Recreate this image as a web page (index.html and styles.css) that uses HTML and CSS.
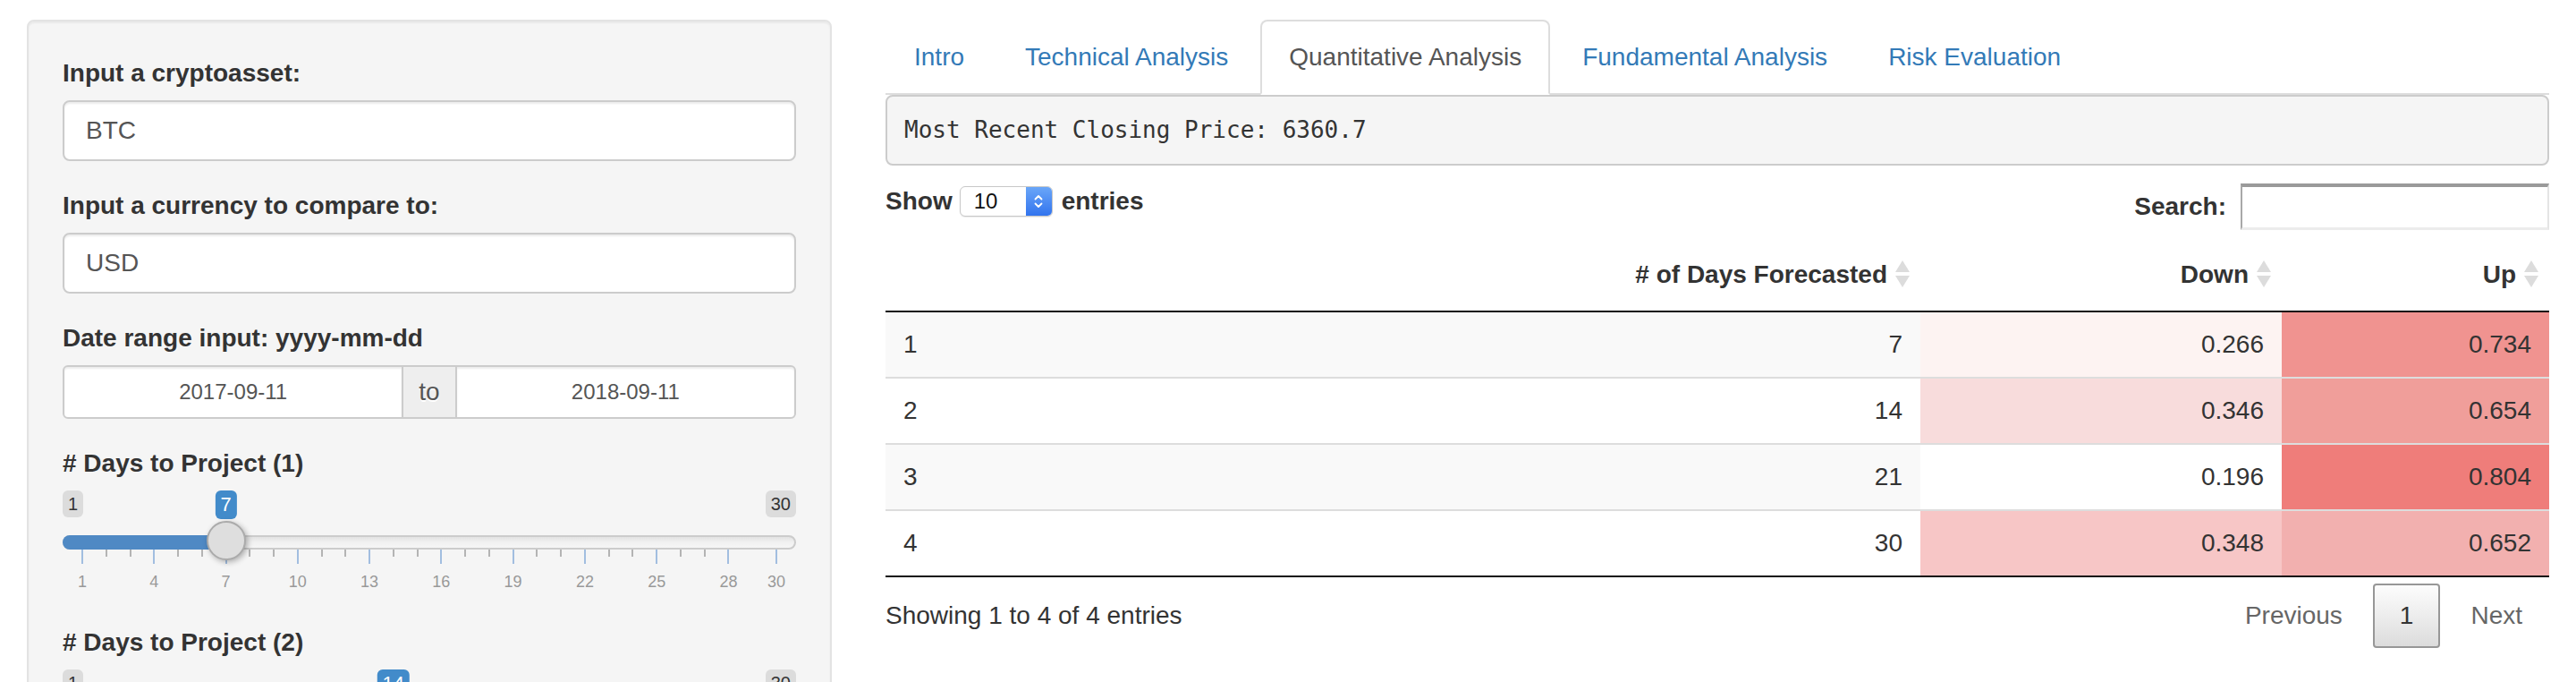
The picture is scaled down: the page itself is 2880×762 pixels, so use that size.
FILE: index.html
```html
<!DOCTYPE html>
<html lang="en">
<head>
<meta charset="utf-8">
<title>Crypto Forecast</title>
<link rel="stylesheet" href="styles.css">
</head>
<body>
<div class="page">
  <aside class="well">
    <div class="form-group">
      <label class="control-label">Input a cryptoasset:</label>
      <div class="text-input">BTC</div>
    </div>
    <div class="form-group">
      <label class="control-label">Input a currency to compare to:</label>
      <div class="text-input">USD</div>
    </div>
    <div class="form-group">
      <label class="control-label">Date range input: yyyy-mm-dd</label>
      <div class="daterange">
        <div class="date-input first">2017-09-11</div>
        <span class="addon">to</span>
        <div class="date-input last">2018-09-11</div>
      </div>
    </div>
    <div class="form-group">
      <label class="control-label"># Days to Project (1)</label>
      <div class="irs">
        <div class="irs-ends"><span class="irs-minmax">1</span><span class="irs-minmax">30</span></div>
        <span class="irs-single" style="left:182.55px">7</span>
        <div class="irs-line"><div class="irs-bar" style="width:182.55px"></div></div>
        <span class="irs-handle" style="left:160.55px"></span>
        <div class="irs-grid">
          <span class="gc major"><i></i><b>1</b></span><span class="gc"><i></i></span><span class="gc"><i></i></span>
          <span class="gc major"><i></i><b>4</b></span><span class="gc"><i></i></span><span class="gc"><i></i></span>
          <span class="gc major"><i></i><b>7</b></span><span class="gc"><i></i></span><span class="gc"><i></i></span>
          <span class="gc major"><i></i><b>10</b></span><span class="gc"><i></i></span><span class="gc"><i></i></span>
          <span class="gc major"><i></i><b>13</b></span><span class="gc"><i></i></span><span class="gc"><i></i></span>
          <span class="gc major"><i></i><b>16</b></span><span class="gc"><i></i></span><span class="gc"><i></i></span>
          <span class="gc major"><i></i><b>19</b></span><span class="gc"><i></i></span><span class="gc"><i></i></span>
          <span class="gc major"><i></i><b>22</b></span><span class="gc"><i></i></span><span class="gc"><i></i></span>
          <span class="gc major"><i></i><b>25</b></span><span class="gc"><i></i></span><span class="gc"><i></i></span>
          <span class="gc major"><i></i><b>28</b></span><span class="gc"></span>
          <span class="gc major"><i></i><b>30</b></span>
        </div>
      </div>
    </div>
    <div class="form-group">
      <label class="control-label"># Days to Project (2)</label>
      <div class="irs">
        <div class="irs-ends"><span class="irs-minmax">1</span><span class="irs-minmax">30</span></div>
        <span class="irs-single" style="left:369.86px">14</span>
        <div class="irs-line"><div class="irs-bar" style="width:369.86px"></div></div>
        <span class="irs-handle" style="left:347.86px"></span>
        <div class="irs-grid">
          <span class="gc major"><i></i><b>1</b></span><span class="gc"><i></i></span><span class="gc"><i></i></span>
          <span class="gc major"><i></i><b>4</b></span><span class="gc"><i></i></span><span class="gc"><i></i></span>
          <span class="gc major"><i></i><b>7</b></span><span class="gc"><i></i></span><span class="gc"><i></i></span>
          <span class="gc major"><i></i><b>10</b></span><span class="gc"><i></i></span><span class="gc"><i></i></span>
          <span class="gc major"><i></i><b>13</b></span><span class="gc"><i></i></span><span class="gc"><i></i></span>
          <span class="gc major"><i></i><b>16</b></span><span class="gc"><i></i></span><span class="gc"><i></i></span>
          <span class="gc major"><i></i><b>19</b></span><span class="gc"><i></i></span><span class="gc"><i></i></span>
          <span class="gc major"><i></i><b>22</b></span><span class="gc"><i></i></span><span class="gc"><i></i></span>
          <span class="gc major"><i></i><b>25</b></span><span class="gc"><i></i></span><span class="gc"><i></i></span>
          <span class="gc major"><i></i><b>28</b></span><span class="gc"></span>
          <span class="gc major"><i></i><b>30</b></span>
        </div>
      </div>
    </div>
  </aside>

  <main class="main">
    <ul class="nav-tabs">
      <li><a href="#">Intro</a></li>
      <li><a href="#">Technical Analysis</a></li>
      <li class="active"><a href="#">Quantitative Analysis</a></li>
      <li><a href="#">Fundamental Analysis</a></li>
      <li><a href="#">Risk Evaluation</a></li>
    </ul>
    <pre class="closing">Most Recent Closing Price: 6360.7</pre>

    <div class="dt-controls">
      <div class="dt-length">
        <span>Show</span>
        <span class="select">
          <span class="select-val">10</span>
          <span class="select-step"><svg width="14" height="22" viewBox="0 0 14 22"><path d="M3.5 8.5 L7 5 L10.5 8.5 M3.5 13.5 L7 17 L10.5 13.5" stroke="#fff" stroke-width="1.8" fill="none" stroke-linecap="round" stroke-linejoin="round"/></svg></span>
        </span>
        <span>entries</span>
      </div>
      <div class="dt-filter">
        <span>Search:</span>
        <span class="search-box"></span>
      </div>
    </div>

    <table class="dt">
      <colgroup><col class="c1"><col class="c2"><col class="c3"><col class="c4"></colgroup>
      <thead>
        <tr>
          <th class="rn-h"></th>
          <th># of Days Forecasted<svg class="sort" width="18" height="32" viewBox="0 0 18 32"><path d="M9 1 L17 14 H1 Z"/><path d="M9 31 L17 18 H1 Z"/></svg></th>
          <th>Down<svg class="sort" width="18" height="32" viewBox="0 0 18 32"><path d="M9 1 L17 14 H1 Z"/><path d="M9 31 L17 18 H1 Z"/></svg></th>
          <th>Up<svg class="sort" width="18" height="32" viewBox="0 0 18 32"><path d="M9 1 L17 14 H1 Z"/><path d="M9 31 L17 18 H1 Z"/></svg></th>
        </tr>
      </thead>
      <tbody>
        <tr class="odd"><td class="rn">1</td><td>7</td><td style="background:#fdf3f2">0.266</td><td style="background:#f09390">0.734</td></tr>
        <tr class="even"><td class="rn">2</td><td>14</td><td style="background:#f8dcdc">0.346</td><td style="background:#f09e9a">0.654</td></tr>
        <tr class="odd"><td class="rn">3</td><td>21</td><td style="background:#ffffff">0.196</td><td style="background:#ef7d7a">0.804</td></tr>
        <tr class="even"><td class="rn">4</td><td>30</td><td style="background:#f7c6c6">0.348</td><td style="background:#f2b0af">0.652</td></tr>
      </tbody>
    </table>

    <div class="dt-footer">
      <div class="dt-info">Showing 1 to 4 of 4 entries</div>
      <div class="dt-paginate">
        <span class="page-btn disabled">Previous</span>
        <span class="page-btn current">1</span>
        <span class="page-btn disabled">Next</span>
      </div>
    </div>
  </main>
</div>
</body>
</html>
```

FILE: styles.css
```css
* { box-sizing: border-box; }
html, body { margin: 0; padding: 0; }
body {
  font-family: "Liberation Sans", Arial, sans-serif;
  font-size: 28px;
  line-height: 40px;
  color: #333;
  background: #fff;
  height: 762px;
  overflow: hidden;
}
.page {
  display: grid;
  grid-template-columns: 900px 1860px;
  column-gap: 60px;
  padding: 22px 30px 0;
  align-items: start;
}

/* ---------- sidebar ---------- */
.well {
  background: #f5f5f5;
  border: 2px solid #e3e3e3;
  border-radius: 8px;
  padding: 38px;
  box-shadow: inset 0 2px 2px rgba(0,0,0,.05);
}
.form-group { margin-bottom: 30px; }
.control-label {
  display: block;
  font-weight: 700;
  margin-bottom: 10px;
}
.text-input {
  height: 68px;
  padding: 12px 24px;
  border: 2px solid #ccc;
  border-radius: 8px;
  background: #fff;
  box-shadow: inset 0 2px 2px rgba(0,0,0,.075);
  line-height: 40px;
  color: #555;
}
.daterange { display: flex; height: 60px; }
.date-input {
  flex: 1;
  border: 2px solid #ccc;
  background: #fff;
  font-size: 24px;
  line-height: 36px;
  padding: 10px 20px;
  text-align: center;
  color: #555;
  box-shadow: inset 0 2px 2px rgba(0,0,0,.075);
}
.date-input.first { border-radius: 6px 0 0 6px; }
.date-input.last { border-radius: 0 6px 6px 0; }
.addon {
  background: #eee;
  border-top: 2px solid #ccc;
  border-bottom: 2px solid #ccc;
  padding: 8px 17px;
  line-height: 40px;
  font-size: 28px;
  color: #555;
  text-shadow: 0 2px 0 #fff;
}

/* slider */
.irs { position: relative; height: 120px; }
.irs-ends {
  display: flex;
  justify-content: space-between;
  align-items: flex-start;
  height: 50px;
}
.irs-minmax {
  background: rgba(0,0,0,.1);
  color: #333;
  font-size: 20px;
  line-height: 26px;
  padding: 2px 6px;
  border-radius: 6px;
}
.irs-single {
  position: absolute;
  top: 0;
  transform: translateX(-50%);
  background: #428bca;
  color: #fff;
  font-size: 22px;
  line-height: 28px;
  padding: 2px 6px;
  border-radius: 6px;
}
.irs-line {
  position: relative;
  height: 16px;
  border: 2px solid #ccc;
  border-radius: 8px;
  background: linear-gradient(#e2e2e2, #f0f0f0 45%, #f6f6f6);
}
.irs-bar {
  position: absolute;
  left: -2px;
  top: -2px;
  height: 16px;
  background: #4f89c4;
  border-radius: 8px 0 0 8px;
}
.irs-handle {
  position: absolute;
  top: 34px;
  width: 44px;
  height: 44px;
  border-radius: 50%;
  background: #dedede;
  border: 2px solid #ababab;
  box-shadow: 2px 2px 6px rgba(0,0,0,.3);
}
.irs-grid {
  display: grid;
  grid-template-columns: repeat(30, 1fr);
  width: 802.76px;
  margin-left: 8.62px;
}
.gc { display: flex; flex-direction: column; align-items: center; }
.gc i { display: block; width: 2px; height: 8px; background: #b4b4b4; }
.gc.major i { height: 16px; background: #a2bee0; }
.gc b {
  font-weight: 400;
  font-size: 18px;
  line-height: 20px;
  margin-top: 10px;
  color: #999;
  white-space: nowrap;
}

/* ---------- main ---------- */
.nav-tabs {
  display: flex;
  list-style: none;
  margin: 0;
  padding: 0;
  border-bottom: 2px solid #ddd;
}
.nav-tabs li { margin-bottom: -2px; }
.nav-tabs a {
  display: block;
  padding: 20px 30px;
  margin-right: 4px;
  border: 2px solid transparent;
  border-radius: 8px 8px 0 0;
  color: #337ab7;
  text-decoration: none;
  line-height: 40px;
}
.nav-tabs li.active a {
  color: #555;
  background: #fff;
  border-color: #ddd #ddd transparent;
}
.closing {
  margin: 0 0 20px;
  padding: 19px;
  font-family: "DejaVu Sans Mono", "Liberation Mono", monospace;
  font-size: 26px;
  line-height: 37px;
  background: #f5f5f5;
  border: 2px solid #ccc;
  border-radius: 8px;
  color: #333;
}

.dt-controls {
  display: flex;
  justify-content: space-between;
  align-items: flex-start;
  height: 62px;
}
.dt-length {
  display: flex;
  align-items: center;
  height: 40px;
  font-weight: 700;
}
.select {
  display: flex;
  width: 104px;
  height: 34px;
  margin: 0 10px 0 8px;
  border: 1px solid #c8c8c8;
  border-radius: 6px;
  background: #fff;
  overflow: hidden;
  box-shadow: 0 1px 1px rgba(0,0,0,.08);
}
.select-val {
  flex: 1;
  font-weight: 400;
  font-size: 24px;
  line-height: 32px;
  padding-left: 15px;
  color: #111;
}
.select-step {
  width: 29px;
  display: flex;
  align-items: center;
  justify-content: center;
  background: linear-gradient(#6aa6f8, #3274ee);
}
.dt-filter {
  display: flex;
  align-items: center;
  font-weight: 700;
  height: 52px;
}
.search-box {
  width: 345px;
  height: 52px;
  margin-left: 16px;
  background: #fff;
  border-top: 4px solid #9a9a9a;
  border-left: 2px solid #a8a8a8;
  border-right: 2px solid #e4e4e4;
  border-bottom: 3px solid #ececec;
}

table.dt {
  width: 100%;
  border-collapse: collapse;
  table-layout: fixed;
}
.c1 { width: 577px; }
.c2 { width: 580px; }
.c3 { width: 404px; }
.c4 { width: 299px; }
table.dt th {
  padding: 20px 11px 20px 20px;
  border-bottom: 2px solid #111;
  font-weight: 700;
  text-align: right;
  white-space: nowrap;
  line-height: 40px;
}
.sort { vertical-align: middle; margin-left: 8px; fill: #dcdcdc; position: relative; top: -3px; }
table.dt td {
  padding: 16px 20px;
  border-top: 2px solid #ddd;
  text-align: right;
  line-height: 40px;
}
table.dt tbody tr:first-child td { border-top: none; }
table.dt tbody tr:last-child td { border-bottom: 2px solid #111; }
table.dt td.rn { text-align: left; }
table.dt tr.odd td { background: #f9f9f9; }

.dt-footer {
  display: flex;
  justify-content: space-between;
  align-items: flex-start;
}
.dt-info { padding-top: 23px; }
.dt-paginate { padding-top: 7px; display: flex; }
.page-btn {
  padding: 14px 28px;
  margin-left: 4px;
  border: 2px solid transparent;
  border-radius: 4px;
  color: #666;
  line-height: 40px;
  min-width: 42px;
  text-align: center;
}
.page-btn.current {
  border-color: #979797;
  background: linear-gradient(#fdfdfd, #dcdcdc);
  color: #333;
}
```
